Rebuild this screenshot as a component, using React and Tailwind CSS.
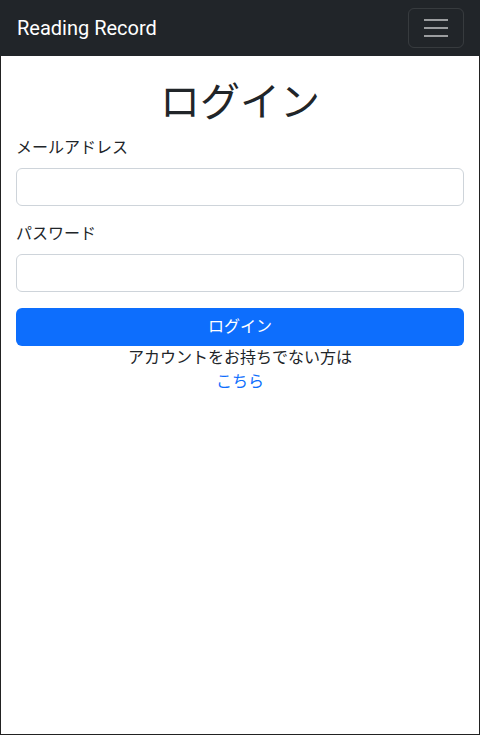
export default function App() {
  return (
    <div
      className="h-[735px] w-[480px] border border-[#222] bg-white text-[#212529]"
      style={{ fontFamily: '"Liberation Sans", "Noto Sans CJK JP", sans-serif' }}
    >
      {/* Navbar */}
      <nav className="-mt-px -mx-px flex h-[56px] items-center justify-between bg-[#212529] pl-[17px] pr-[16px]">
        <span className="text-[20px] leading-[30px] text-white" style={{ fontFamily: 'Roboto, "Liberation Sans", sans-serif' }}>
          Reading Record
        </span>
        <button className="flex h-[40px] w-[56px] flex-col items-center justify-center gap-[6px] rounded-[6px] border border-white/10">
          <span className="block h-[2px] w-[24px] bg-white/55" />
          <span className="block h-[2px] w-[24px] bg-white/55" />
          <span className="block h-[2px] w-[24px] bg-white/55" />
        </button>
      </nav>

      {/* Login form */}
      <div className="px-[15px] pt-[22px]">
        <h1 className="text-center text-[40px] leading-[48px] font-normal">ログイン</h1>

        <div className="mt-[10px]">
          <label className="block text-[16px] leading-[24px]">メールアドレス</label>
          <input
            type="email"
            className="mt-[8px] block h-[38px] w-full rounded-[6px] border border-[#ced4da] px-3"
          />
        </div>

        <div className="mt-[16px]">
          <label className="block text-[16px] leading-[24px]">パスワード</label>
          <input
            type="password"
            className="mt-[8px] block h-[38px] w-full rounded-[6px] border border-[#ced4da] px-3"
          />
        </div>

        <button className="mt-[16px] block h-[38px] w-full rounded-[6px] bg-[#0d6efd] text-[16px] text-white">
          ログイン
        </button>

        <p className="text-center text-[16px] leading-[24px]">アカウントをお持ちでない方は</p>
        <p className="text-center text-[16px] leading-[24px]">
          <a href="#" className="text-[#0d6efd]">こちら</a>
        </p>
      </div>
    </div>
  );
}
